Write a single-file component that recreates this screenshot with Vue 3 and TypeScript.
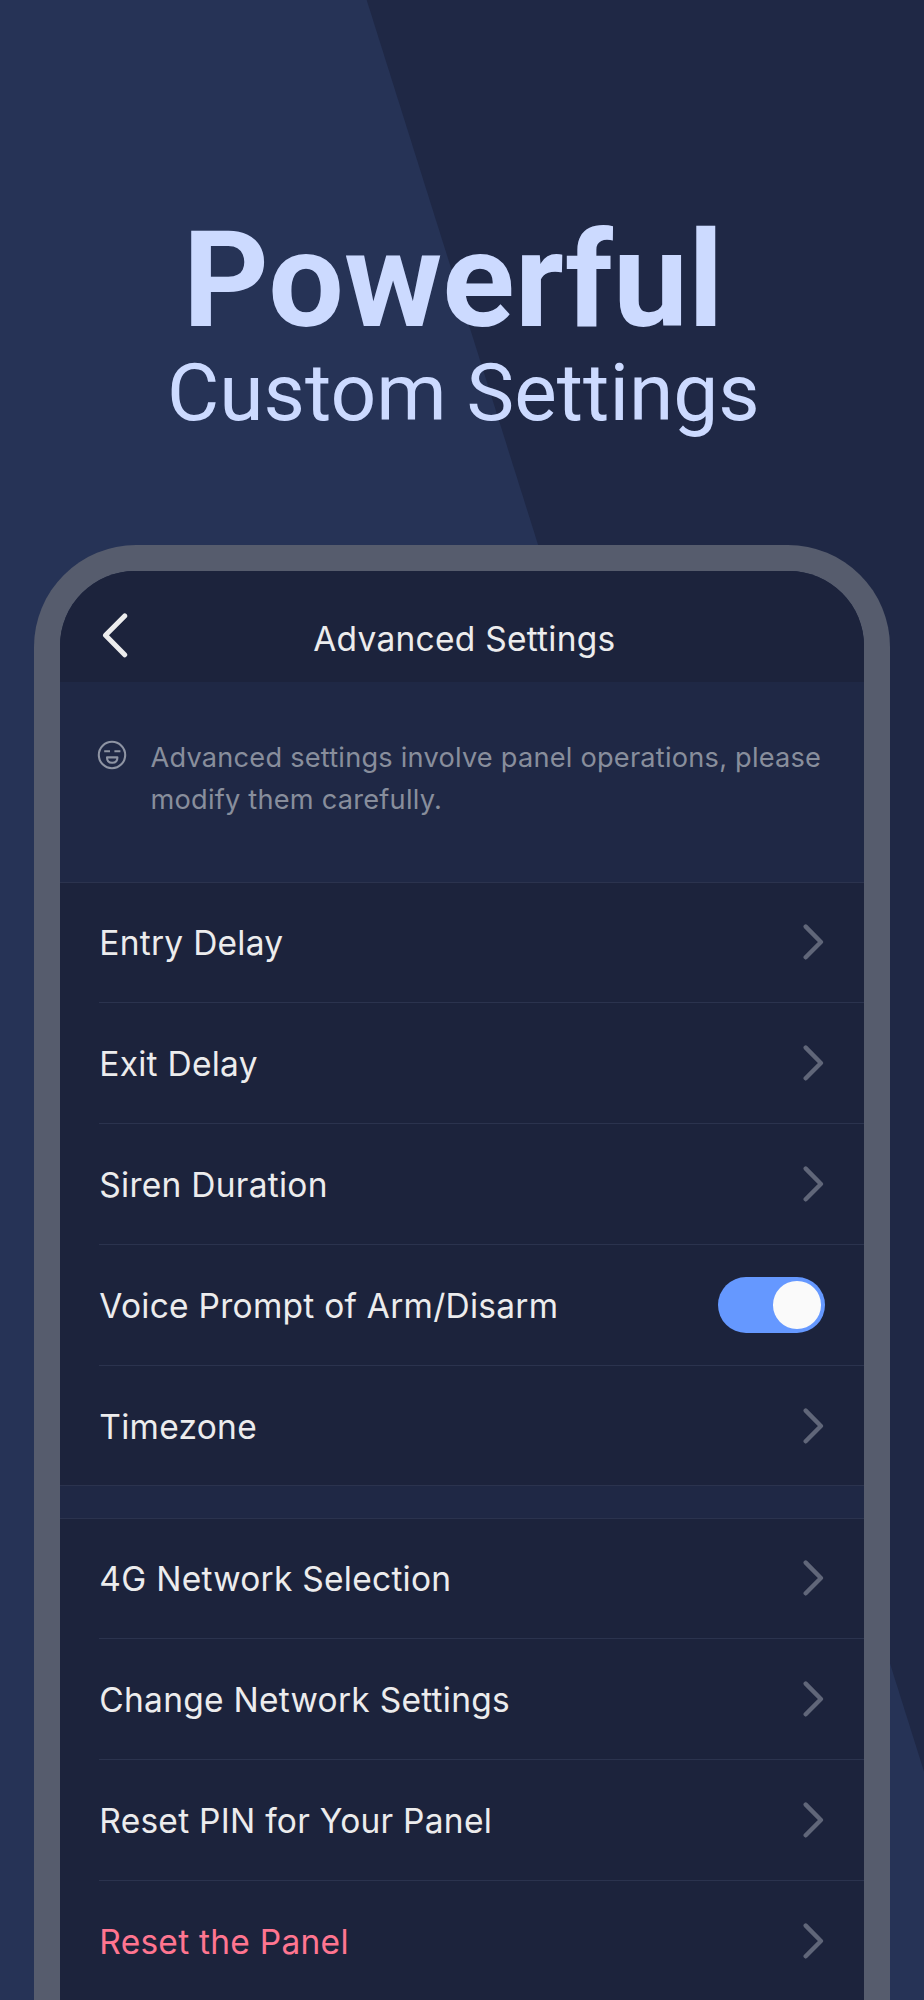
<script setup lang="ts">
import { ref } from 'vue'

interface Item {
  label: string
  kind: 'link' | 'switch'
  danger?: boolean
}

const voicePrompt = ref(true)

const groups: Item[][] = [
  [
    { label: 'Entry Delay', kind: 'link' },
    { label: 'Exit Delay', kind: 'link' },
    { label: 'Siren Duration', kind: 'link' },
    { label: 'Voice Prompt of Arm/Disarm', kind: 'switch' },
    { label: 'Timezone', kind: 'link' },
  ],
  [
    { label: '4G Network Selection', kind: 'link' },
    { label: 'Change Network Settings', kind: 'link' },
    { label: 'Reset PIN for Your Panel', kind: 'link' },
    { label: 'Reset the Panel', kind: 'link', danger: true },
  ],
]
</script>

<template>
  <main class="poster">
    <svg class="backdrop" viewBox="0 0 924 2000" aria-hidden="true">
      <path d="M366.7 0H924V1771.5Z" fill="#1f2845" />
    </svg>

    <h1 class="headline">
      <span class="strong">Powerful</span>
      <span class="light">Custom Settings</span>
    </h1>

    <div class="phone">
      <div class="screen">
        <header class="bar">
          <button class="back" aria-label="Back">
            <svg width="26" height="46" viewBox="0 0 26 46" fill="none">
              <path d="M22.7 3.9L3.5 23.3L22.7 42.8" stroke="#ececed" stroke-width="5" stroke-linecap="round" stroke-linejoin="round" />
            </svg>
          </button>
          <h2 class="title">Advanced Settings</h2>
        </header>

        <section class="note">
          <svg class="face" width="30" height="30" viewBox="0 0 30 30" fill="none" stroke="#8e94a3" stroke-width="2.1">
            <circle cx="15" cy="15" r="13.2" />
            <path d="M7.2 11.2H13M17.4 11.2H23.4" />
            <path d="M10 17.4H20.4C20.4 20.8 18.2 22.8 15.2 22.8C12.2 22.8 10 20.8 10 17.4Z" stroke-linejoin="round" />
          </svg>
          <p class="hint">Advanced settings involve panel operations, please modify them carefully.</p>
        </section>

        <ul v-for="(group, g) in groups" :key="g" class="group">
          <li v-for="item in group" :key="item.label" class="row" :class="{ danger: item.danger }">
            <span class="label">{{ item.label }}</span>
            <svg v-if="item.kind === 'link'" class="chevron" width="22" height="36" viewBox="0 0 22 36" fill="none">
              <path d="M3.7 2.6L18.9 18L3.7 33.3" stroke="#606679" stroke-width="4.4" stroke-linecap="round" stroke-linejoin="round" />
            </svg>
            <button v-else class="switch" :class="{ on: voicePrompt }" role="switch" :aria-checked="voicePrompt" :aria-label="item.label" @click="voicePrompt = !voicePrompt">
              <span class="knob"></span>
            </button>
          </li>
        </ul>
      </div>
    </div>
  </main>
</template>

<style>
body {
  margin: 0;
  background: #263356;
}
</style>

<style scoped>
.poster {
  position: relative;
  box-sizing: border-box;
  width: 924px;
  height: 2000px;
  padding-top: 221px;
  overflow: hidden;
  background: #263356;
  font-family: Inter, "Liberation Sans", sans-serif;
}
.backdrop {
  position: absolute;
  inset: 0;
  width: 924px;
  height: 2000px;
}
.headline {
  position: relative;
  height: 323.7px;
  margin: 0;
  color: #ccdaff;
  font-family: Roboto, sans-serif;
  white-space: nowrap;
}
.strong,
.light {
  display: block;
}
.strong {
  padding-left: 182.8px;
  font-size: 134px;
  font-weight: 700;
  line-height: 120px;
}
.light {
  margin-top: 4.6px;
  padding-left: 167px;
  font-size: 80.3px;
  font-weight: 400;
  line-height: 94px;
}
.phone {
  position: relative;
  box-sizing: border-box;
  width: 856.6px;
  height: 1600px;
  margin: 0 auto;
  padding: 26.6px 26.6px 0;
  border-radius: 102px 102px 0 0;
  background: #565c6d;
}
.screen {
  height: 100%;
  overflow: hidden;
  border-radius: 75px 75px 0 0;
  background: #1f2845;
}
.bar {
  position: relative;
  box-sizing: border-box;
  display: flex;
  align-items: flex-start;
  height: 110.7px;
  padding: 40.4px 0 0 41.7px;
  background: #1c233c;
}
.back,
.switch {
  padding: 0;
  border: 0;
  background: none;
}
.back {
  height: 46px;
}
.back svg,
.chevron,
.face {
  display: block;
  flex: none;
}
.title {
  margin: 5.6px 0 0 185.2px;
  color: #ececed;
  font-size: 33.5px;
  font-weight: 400;
  line-height: 44px;
  letter-spacing: 0.26px;
  white-space: nowrap;
}
.note {
  box-sizing: border-box;
  display: flex;
  align-items: flex-start;
  height: 200px;
  padding: 54.8px 30px 0 36.4px;
}
.face {
  margin-top: 3.2px;
}
.hint {
  margin: 0 0 0 23.8px;
  color: #888e9c;
  font-size: 27.2px;
  line-height: 42.6px;
  letter-spacing: 0.22px;
}
.group {
  margin: 0;
  padding: 0 0 0 39px;
  border-top: 1px solid #2b334e;
  background: #1c233c;
  list-style: none;
}
.group + .group {
  margin-top: 32px;
}
.group:not(:last-child) {
  border-bottom: 1px solid #2b334e;
}
.row {
  box-sizing: border-box;
  display: flex;
  align-items: center;
  justify-content: space-between;
  height: 121px;
  padding-right: 38.6px;
  border-bottom: 1px solid #2b334e;
  color: #ececed;
}
.row:first-child {
  height: 120px;
}
.group:not(:last-child) .row:last-child {
  height: 119px;
  padding-top: 1px;
  border-bottom: 0;
}
.label {
  padding-top: 1.6px;
  font-size: 33.5px;
  line-height: 44px;
  letter-spacing: 0.26px;
  white-space: nowrap;
}
.danger .label {
  color: #ff7590;
}
.chevron {
  margin-right: 1.2px;
}
.switch {
  box-sizing: border-box;
  display: flex;
  width: 107.2px;
  height: 56px;
  padding: 4.2px;
  border-radius: 28px;
  background: #565c6d;
}
.switch.on {
  justify-content: flex-end;
  background: #6598ff;
}
.knob {
  width: 47.6px;
  height: 47.6px;
  border-radius: 50%;
  background: #fafafa;
}
</style>
